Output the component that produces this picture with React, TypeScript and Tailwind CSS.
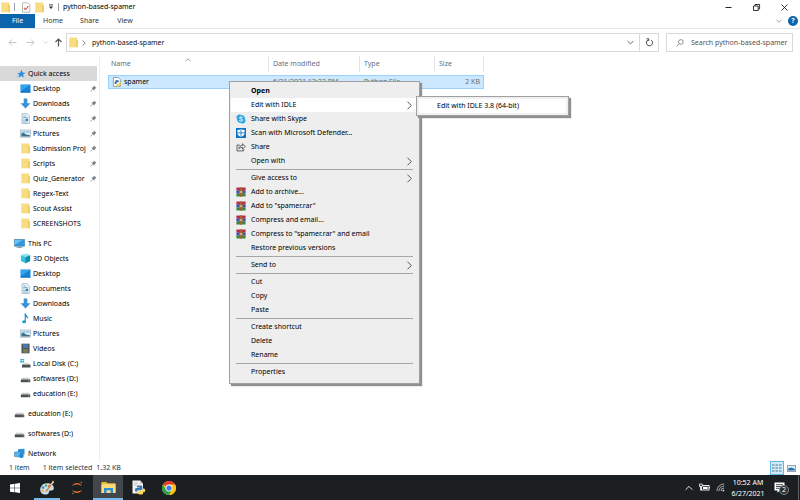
import { Fragment } from 'react';
import type { ReactNode } from 'react';

interface IconProps {
  className?: string;
}

function FolderIcon({ className = 'h-[11px] w-[11px]' }: IconProps) {
  return (
    <svg viewBox="0 0 11 11" className={className}>
      <path d="M1 .5h8.2v9.8H1z" fill="#f8dc83" />
      <path d="M8 3h2v7.3H8z" fill="#f2ce63" />
      <path d="M1 .5h1v9.8H1z" fill="#fbe7a4" />
    </svg>
  );
}

function StarIcon() {
  return (
    <svg viewBox="0 0 10 10" className="h-[10px] w-[10px]">
      <path d="M5.600.8l.9 2.700 3 .2-2.400 1.800.7 3L5.300 7 2.600 8.800l.7-3L1 4.200l2.800-.3z" fill="#2d8fdd" />
      <path d="M.3 8.500l2.200-2" stroke="#8fc3ec" strokeWidth=".8" />
    </svg>
  );
}

function DesktopIcon() {
  return (
    <svg viewBox="0 0 11 11" className="h-[11px] w-[11px]">
      <rect x=".5" y="1.500" width="10" height="8" fill="#1583d8" />
      <path d="M1 2h9L1 8z" fill="#2fa4f2" />
      <path d="M.5 8.700h10v.8H.5z" fill="#0f65ac" />
    </svg>
  );
}

function DownloadIcon() {
  return (
    <svg viewBox="0 0 11 11" className="h-[11px] w-[11px]">
      <path d="M3.700.5h3.600v4.700h3.200L5.500 10.500.5 5.200h3.200z" fill="#3a93d2" />
    </svg>
  );
}

function DocumentIcon() {
  return (
    <svg viewBox="0 0 11 11" className="h-[11px] w-[11px]">
      <path d="M2 .7h5.200L9.300 3v7.400H2z" fill="#f5f9fb" stroke="#8da4b2" strokeWidth=".7" />
      <path d="M3.200 3h3M3.200 4.500h4.600M3.200 6h1.500M3.200 7.500h1.500M3.200 9h4.600" stroke="#4e9bc8" strokeWidth=".7" />
      <path d="M5.500 5.600h2.600v2.400H5.500z" fill="#3c85b5" />
    </svg>
  );
}

function PictureIcon() {
  return (
    <svg viewBox="0 0 11 11" className="h-[11px] w-[11px]">
      <rect x=".6" y="2" width="9.800" height="7.200" fill="#e9f3f8" stroke="#a4b2ba" strokeWidth=".7" />
      <path d="M1.300 2.800h8.400v2.200H1.300z" fill="#9fd3ef" />
      <path d="M1.300 8.400V5.600l2.400-.9 2.200 1.700 3.800.7v1.300z" fill="#3d6f86" />
    </svg>
  );
}

function ComputerIcon() {
  return (
    <svg viewBox="0 0 11 11" className="h-[11px] w-[11px]">
      <rect x=".4" y="1.300" width="10.200" height="6.900" fill="#2a98e2" stroke="#5c7f97" strokeWidth=".6" />
      <path d="M.8 1.700h8L.8 7z" fill="#68c0f5" />
      <path d="M4.500 8.200h2v1h2v.8h-6v-.8h2z" fill="#7f99a8" />
    </svg>
  );
}

function CubeIcon() {
  return (
    <svg viewBox="0 0 11 11" className="h-[11px] w-[11px]">
      <path d="M5.500.7l4.600 1.600v5.800L5.500 10.300.9 8.100V2.300z" fill="#35c3dd" />
      <path d="M5.500.7l4.600 1.600-4.600 1.900L.9 2.300z" fill="#8ee3ef" />
      <path d="M5.500 4.200l4.600-1.900v5.800l-4.600 2.200z" fill="#1389ab" />
    </svg>
  );
}

function MusicIcon() {
  return (
    <svg viewBox="0 0 11 11" className="h-[11px] w-[11px]">
      <path d="M4.600.5h1.100c.2 2 3.200 2.600 2.400 5.600-.3-1.300-1.200-1.900-2.300-2.200v4.500" fill="#1b93dc" />
      <ellipse cx="4.100" cy="8.700" rx="1.900" ry="1.500" fill="#1b93dc" />
      <path d="M4.700.7v8h1.100v-8z" fill="#1b93dc" />
    </svg>
  );
}

function VideoIcon() {
  return (
    <svg viewBox="0 0 11 11" className="h-[11px] w-[11px]">
      <rect x="1.500" y=".7" width="8" height="9.600" fill="#3b4044" />
      <rect x="3" y="1.200" width="5" height="4" fill="#4a78b8" />
      <rect x="3" y="5.800" width="5" height="4" fill="#7b7d4e" />
      <path d="M2.200 1v9M8.800 1v9" stroke="#c4c8ca" strokeWidth=".5" strokeDasharray=".7 .7" />
    </svg>
  );
}

function DriveIcon() {
  return (
    <svg viewBox="0 0 11 11" className="h-[11px] w-[11px]">
      <path d="M2.200 4.800h6.600l1.400 2H.8z" fill="#c9cbcc" />
      <rect x=".8" y="6.600" width="9.500" height="2.700" rx=".3" fill="#4d5052" />
      <rect x="8.200" y="7.600" width="1.200" height=".7" fill="#8fe08b" />
    </svg>
  );
}

function SystemDriveIcon() {
  return (
    <svg viewBox="0 0 11 11" className="h-[11px] w-[11px]">
      <path d="M.3 1h1.700v1.600H.3zM2.400 1h1.700v1.600H2.400zM.3 3h1.700v1.600H.3zM2.400 3h1.700v1.600H2.400z" fill="#19a9e5" />
      <path d="M3 5.200h6.200l1 1.800H2z" fill="#c9cbcc" />
      <rect x="2" y="6.800" width="8.500" height="2.700" rx=".3" fill="#4d5052" />
    </svg>
  );
}

function NetworkIcon() {
  return (
    <svg viewBox="0 0 11 11" className="h-[11px] w-[11px]">
      <path d="M4 1.200l6.500-.5v5.800L4 6z" fill="#2f8fd6" />
      <path d="M.5 4l6-.3v5.500l-6-.6z" fill="#58b4ee" stroke="#2878b4" strokeWidth=".5" />
      <circle cx="7.500" cy="7.700" r="2.200" fill="#2786c6" />
    </svg>
  );
}

function PinIcon() {
  return (
    <svg viewBox="0 0 8 8" className="h-[7px] w-[7px] shrink-0">
      <path d="M4.500.6l2.900 2.900-.9.200-1.300 1.400-.2 1.500L1.500 3.100 3 2.900l1.300-1.300z" fill="#7a828b" />
      <path d="M3 5L.7 7.300" stroke="#7a828b" strokeWidth=".9" />
    </svg>
  );
}

function PythonFileIcon() {
  return (
    <svg viewBox="0 0 11 11" className="h-[10px] w-[10px]">
      <path d="M1.500.6h5.500l2.200 2.200v7.600H1.500z" fill="#fdfdfd" stroke="#78838c" strokeWidth=".8" />
      <path d="M3.800 3.600h3.500v2.200H5v2H3V5.200h.8z" fill="#35678f" />
      <path d="M9.500 6v3.300H7v1.200H5V7.800h2.500V6z" fill="#f3cf3f" />
    </svg>
  );
}

function SkypeIcon() {
  return (
    <svg viewBox="0 0 12 12" className="h-[10px] w-[10px]">
      <circle cx="4.200" cy="4.200" r="3.500" fill="#2ba7e4" />
      <circle cx="7.800" cy="7.800" r="3.500" fill="#2ba7e4" />
      <circle cx="6" cy="6" r="4.700" fill="#2ba7e4" />
      <path d="M8 4.300C7.600 3.300 4.200 3 4.200 4.700c0 1.500 3.800 1 3.800 2.700 0 1.500-3.500 1.500-4.100.2" fill="none" stroke="#fff" strokeWidth="1.100" />
    </svg>
  );
}

function DefenderIcon() {
  return (
    <svg viewBox="0 0 12 12" className="h-[10px] w-[10px]">
      <rect width="12" height="12" fill="#0f73c4" />
      <path d="M6 1.200c1.300.9 2.800 1.200 4.300 1.200v3.200c0 2.600-1.900 4.200-4.300 5.200-2.400-1-4.300-2.600-4.300-5.200V2.400C3.200 2.400 4.700 2.100 6 1.200z" fill="#fff" />
      <path d="M6 1v10M1.500 5.800h9" stroke="#0f73c4" strokeWidth="1" />
    </svg>
  );
}

function ShareIcon() {
  return (
    <svg viewBox="0 0 12 12" className="h-[10px] w-[10px]" fill="none" stroke="#333" strokeWidth=".9">
      <path d="M4.500 3.700H1.200v7h8V8.800" />
      <path d="M3.500 8.200c.2-2.800 1.700-4 4.200-4V2.100l3.500 3.300-3.500 3.200V6.500C5.800 6.500 4.500 7 3.500 8.200z" />
    </svg>
  );
}

function RarIcon() {
  return (
    <svg viewBox="0 0 12 12" className="h-[10px] w-[10px]">
      <path d="M.5.700h11v3.600H.5z" fill="#c42a4c" />
      <path d="M.5 4.300h11v3.500H.5z" fill="#3b55b5" />
      <path d="M.5 7.800h11v3.600H.5z" fill="#3f8f3f" />
      <path d="M.5 1.600h11M.5 5.200h11M.5 8.700h11" stroke="#1f1f3a" strokeOpacity=".35" strokeWidth=".6" />
      <path d="M4.600.5h2.800v11H4.600z" fill="#a8602b" />
      <rect x="3.900" y="4.200" width="4.200" height="3.700" fill="#f0d9a0" stroke="#6c3c1a" strokeWidth=".6" />
      <path d="M6 5v2" stroke="#6c3c1a" strokeWidth=".8" />
    </svg>
  );
}

function Chevron({ className = 'h-[9px] w-[9px]' }: IconProps) {
  return (
    <svg viewBox="0 0 9 9" className={className} fill="none" stroke="currentColor">
      <path d="M2.500.7l3.800 3.800-3.800 3.800" />
    </svg>
  );
}

interface NavItem {
  label: string;
  icon: ReactNode;
  pinned?: boolean;
}

const quickAccess: NavItem[] = [
  { label: 'Desktop', icon: <DesktopIcon />, pinned: true },
  { label: 'Downloads', icon: <DownloadIcon />, pinned: true },
  { label: 'Documents', icon: <DocumentIcon />, pinned: true },
  { label: 'Pictures', icon: <PictureIcon />, pinned: true },
  { label: 'Submission Proj', icon: <FolderIcon />, pinned: true },
  { label: 'Scripts', icon: <FolderIcon />, pinned: true },
  { label: 'Quiz_Generator', icon: <FolderIcon />, pinned: true },
  { label: 'Regex-Text', icon: <FolderIcon /> },
  { label: 'Scout Assist', icon: <FolderIcon /> },
  { label: 'SCREENSHOTS', icon: <FolderIcon /> },
];

const thisPc: NavItem[] = [
  { label: '3D Objects', icon: <CubeIcon /> },
  { label: 'Desktop', icon: <DesktopIcon /> },
  { label: 'Documents', icon: <DocumentIcon /> },
  { label: 'Downloads', icon: <DownloadIcon /> },
  { label: 'Music', icon: <MusicIcon /> },
  { label: 'Pictures', icon: <PictureIcon /> },
  { label: 'Videos', icon: <VideoIcon /> },
  { label: 'Local Disk (C:)', icon: <SystemDriveIcon /> },
  { label: 'softwares (D:)', icon: <DriveIcon /> },
  { label: 'education (E:)', icon: <DriveIcon /> },
];

interface MenuItem {
  label: string;
  icon?: ReactNode;
  submenu?: boolean;
  bold?: boolean;
  active?: boolean;
}

const menuGroups: MenuItem[][] = [
  [
    { label: 'Open', bold: true },
    { label: 'Edit with IDLE', submenu: true, active: true },
    { label: 'Share with Skype', icon: <SkypeIcon /> },
    { label: 'Scan with Microsoft Defender...', icon: <DefenderIcon /> },
    { label: 'Share', icon: <ShareIcon /> },
    { label: 'Open with', submenu: true },
  ],
  [
    { label: 'Give access to', submenu: true },
    { label: 'Add to archive...', icon: <RarIcon /> },
    { label: 'Add to "spamer.rar"', icon: <RarIcon /> },
    { label: 'Compress and email...', icon: <RarIcon /> },
    { label: 'Compress to "spamer.rar" and email', icon: <RarIcon /> },
    { label: 'Restore previous versions' },
  ],
  [{ label: 'Send to', submenu: true }],
  [{ label: 'Cut' }, { label: 'Copy' }, { label: 'Paste' }],
  [{ label: 'Create shortcut' }, { label: 'Delete' }, { label: 'Rename' }],
  [{ label: 'Properties' }],
];

function TitleBar() {
  return (
    <header className="flex h-[14px] items-center justify-between">
      <div className="flex items-center">
        <FolderIcon />
        <span className="ml-[3px] h-2 w-px bg-gray-400" />
        <button aria-label="Properties" className="ml-[6px]">
          <svg viewBox="0 0 10 11" className="h-[11px] w-[10px]">
            <path d="M1.500.8h5.300l2 2v7.500H1.500z" fill="#fff" stroke="#a9a9a9" strokeWidth=".8" />
            <path d="M3 5.800l1.500 1.800L7.500 4" fill="none" stroke="#d6573d" strokeWidth="1.100" />
          </svg>
        </button>
        <button aria-label="New folder" className="ml-[3px]">
          <FolderIcon />
        </button>
        <button aria-label="Customize toolbar" className="ml-[3px]">
          <svg viewBox="0 0 6 6" className="h-[6px] w-[6px]">
            <path d="M1 .9h4" stroke="#333" strokeWidth=".9" />
            <path d="M.8 2.600h4.400L3 5z" fill="#333" />
          </svg>
        </button>
        <span className="ml-[4px] h-2 w-px bg-gray-400" />
        <h1 className="ml-1">python-based-spamer</h1>
      </div>
      <div className="flex items-center gap-[19px] pr-[11px] text-[#222]">
        <button aria-label="Minimize">
          <svg viewBox="0 0 9 9" className="h-[9px] w-[9px]" stroke="currentColor">
            <path d="M1.500 4.500h6" />
          </svg>
        </button>
        <button aria-label="Restore">
          <svg viewBox="0 0 9 9" className="h-[9px] w-[9px]" fill="none" stroke="currentColor" strokeWidth=".9">
            <path d="M1.500 3h4.700v4.500H1.500zM3 3V1.500h4.600V6H6.200" />
          </svg>
        </button>
        <button aria-label="Close">
          <svg viewBox="0 0 9 9" className="h-[9px] w-[9px]" stroke="currentColor" strokeWidth=".9">
            <path d="M1.500 1.500l6 6M7.500 1.500l-6 6" />
          </svg>
        </button>
      </div>
    </header>
  );
}

function Ribbon() {
  return (
    <nav className="flex h-[15px] items-center border-b border-[#e4e5e6] text-[#333]">
      <button className="h-full w-[35px] bg-[#0c64ad] text-white">File</button>
      <button className="w-[36px]">Home</button>
      <button className="w-[37px]">Share</button>
      <button className="w-[34px]">View</button>
      <button aria-label="Expand the ribbon" className="ml-auto text-gray-500">
        <Chevron className="h-[6px] w-[6px] rotate-90" />
      </button>
      <button
        aria-label="Help"
        className="mr-[2px] ml-[6px] flex h-[10px] w-[10px] items-center justify-center rounded-full bg-[#0c64ad] font-bold text-white"
      >
        ?
      </button>
    </nav>
  );
}

function AddressBar() {
  return (
    <div className="flex h-[27px] items-center pr-[7px] text-[#444]">
      <div className="flex w-[66px] shrink-0 items-center pl-2">
        <button aria-label="Back" className="text-[#c4c6c8]">
          <svg viewBox="0 0 9 9" className="h-[9px] w-[9px]" fill="none" stroke="currentColor">
            <path d="M8.500 4.500H1M4 1.500l-3 3 3 3" />
          </svg>
        </button>
        <button aria-label="Forward" className="ml-[9px] text-[#c4c6c8]">
          <svg viewBox="0 0 9 9" className="h-[9px] w-[9px]" fill="none" stroke="currentColor">
            <path d="M.5 4.500H8M5 1.500l3 3-3 3" />
          </svg>
        </button>
        <button aria-label="Recent locations" className="ml-2 text-[#b4b6b8]">
          <Chevron className="h-[5px] w-[5px] rotate-90" />
        </button>
        <button aria-label="Up" className="ml-[6px] text-[#555]">
          <svg viewBox="0 0 9 9" className="h-[9px] w-[9px]" fill="none" stroke="currentColor" strokeWidth="1.200">
            <path d="M4.500 8.500V1M1.500 4l3-3 3 3" />
          </svg>
        </button>
      </div>
      <div className="flex h-[19px] flex-1 items-center border border-[#d9d9d9]">
        <span className="ml-px">
          <FolderIcon />
        </span>
        <Chevron className="mx-[2px] h-[6px] w-[6px]" />
        <button className="ml-[3px] text-[#111]">python-based-spamer</button>
        <button aria-label="Previous locations" className="mr-[5px] ml-auto">
          <Chevron className="h-[7px] w-[7px] rotate-90" />
        </button>
        <button
          aria-label="Refresh"
          className="flex h-full w-[19px] items-center justify-center border-l border-[#d9d9d9]"
        >
          <svg viewBox="0 0 9 9" className="h-[9px] w-[9px]" fill="none" stroke="currentColor">
            <path d="M6.300 2.200A3.100 3.100 0 1 1 3 2" />
            <path d="M1.500.8h2.200V3" />
          </svg>
        </button>
      </div>
      <label className="ml-[7px] flex h-[19px] w-[127px] items-center border border-[#d9d9d9] pl-[9px]">
        <svg viewBox="0 0 9 9" className="h-[8px] w-[8px] shrink-0" fill="none" stroke="#777" strokeWidth=".9">
          <circle cx="5.500" cy="3.300" r="2.600" />
          <path d="M3.600 5.300L.8 8.200" />
        </svg>
        <input
          type="text"
          aria-label="Search"
          placeholder="Search python-based-spamer"
          className="ml-[7px] w-full min-w-0 placeholder-[#555] outline-none"
        />
      </label>
    </div>
  );
}

function NavRoot({ label, icon }: NavItem) {
  return (
    <button className="flex h-[15px] w-full items-center gap-[3px] pl-[14px] text-left">
      {icon}
      {label}
    </button>
  );
}

function NavChild({ label, icon, pinned }: NavItem) {
  return (
    <button className="flex h-[15px] w-full items-center gap-[2px] pl-[20px] text-left whitespace-nowrap">
      {icon}
      <span className="w-[55px]">{label}</span>
      {pinned && <PinIcon />}
    </button>
  );
}

function Sidebar() {
  return (
    <aside className="w-[100px] shrink-0 border-r border-[#eeeeee] pt-[10px] pr-[2px]">
      <button className="flex h-[15px] w-full items-center gap-[2px] bg-[#d9d9d9] pl-[16px] text-left">
        <StarIcon />
        Quick access
      </button>
      {quickAccess.map((item) => (
        <NavChild key={item.label} {...item} />
      ))}
      <div className="mt-[5px]">
        <NavRoot label="This PC" icon={<ComputerIcon />} />
        {thisPc.map((item) => (
          <NavChild key={item.label} {...item} />
        ))}
      </div>
      <div className="mt-[5px] flex flex-col gap-[5px]">
        <NavRoot label="education (E:)" icon={<DriveIcon />} />
        <NavRoot label="softwares (D:)" icon={<DriveIcon />} />
        <NavRoot label="Network" icon={<NetworkIcon />} />
      </div>
    </aside>
  );
}

function FileList() {
  return (
    <table className="ml-2 w-[376px] table-fixed border-separate border-spacing-0">
      <thead>
        <tr className="h-[16px] text-left text-[#5f6f86]">
          <th className="w-[161px] border-r border-[#e5e5e5] pl-[3px] font-normal">
            <div className="flex items-center">
              <button className="w-[74px] text-left">Name</button>
              <Chevron className="mb-2 h-[6px] w-[6px] -rotate-90 text-gray-500" />
            </div>
          </th>
          <th className="w-[91px] border-r border-[#e5e5e5] pl-1 font-normal">
            <button>Date modified</button>
          </th>
          <th className="w-[75px] border-r border-[#e5e5e5] pl-1 font-normal">
            <button>Type</button>
          </th>
          <th className="border-r border-[#e5e5e5] pl-1 font-normal">
            <button>Size</button>
          </th>
        </tr>
      </thead>
      <tbody>
        <tr>
          <td colSpan={4} className="h-[3px]" />
        </tr>
        <tr className="h-[14px] bg-[#cce8ff] text-[#6d6d6d]">
          <td className="border-y border-l border-[#99d1ff] pl-[3px] text-black">
            <span className="flex items-center gap-[2px]">
              <PythonFileIcon />
              spamer
            </span>
          </td>
          <td className="border-y border-[#99d1ff] pl-1 whitespace-nowrap">6/21/2021 12:22 PM</td>
          <td className="border-y border-[#99d1ff] pl-1">Python File</td>
          <td className="border-y border-r border-[#99d1ff] pr-[3px] text-right">2 KB</td>
        </tr>
      </tbody>
    </table>
  );
}

function ContextMenu() {
  return (
    <div
      role="menu"
      className="absolute top-[25px] left-[129px] w-[191px] border border-[#a0a0a0] bg-[#eeeeee] px-px pt-[2px] pb-1 shadow-[2px_2px_1px_#909090]"
    >
      {menuGroups.map((group, index) => (
        <Fragment key={group[0].label}>
          {index > 0 && <hr className="mx-[5px] my-px border-[#a6a6a6]" />}
          {group.map((item) => (
            <button
              key={item.label}
              role="menuitem"
              className={`flex h-[14px] w-full items-center pr-[4px] pl-[5px] text-left ${item.active ? 'bg-white' : ''}`}
            >
              <span className="w-[15px] shrink-0">{item.icon}</span>
              <span className={`flex-1 whitespace-nowrap ${item.bold ? 'font-bold' : ''}`}>{item.label}</span>
              {item.submenu && <Chevron className="h-[9px] w-[9px] text-[#555]" />}
            </button>
          ))}
        </Fragment>
      ))}
    </div>
  );
}

function SubMenu() {
  return (
    <div
      role="menu"
      className="absolute top-[40px] left-[316px] w-[153px] border border-[#a0a0a0] bg-[#f0f0f0] p-[2px] shadow-[2px_2px_1px_#909090]"
    >
      <button role="menuitem" className="flex h-[14px] w-full items-center bg-white pl-[18px] text-left">
        Edit with IDLE 3.8 (64-bit)
      </button>
    </div>
  );
}

function StatusBar() {
  return (
    <footer className="flex h-[14px] items-center pr-[4px] pl-[9px] text-[#22364e]">
      <span>1 item</span>
      <span className="ml-[13px]">1 item selected</span>
      <span className="ml-1">1.32 KB</span>
      <button
        aria-label="Details view"
        className="ml-auto flex h-[14px] w-[14px] items-center justify-center border border-[#5fb8e8] bg-[#cfeaf9]"
      >
        <svg viewBox="0 0 10 8" className="h-[8px] w-[10px]">
          <path d="M0 1h2.500M0 4h2.500M0 7h2.500M3.500 1h2.500M3.500 4h2.500M3.500 7h2.500M7 1h2.500M7 4h2.500M7 7h2.500" stroke="#55788f" strokeWidth="1" />
        </svg>
      </button>
      <button aria-label="Large icons view" className="ml-[3px]">
        <svg viewBox="0 0 9 7" className="h-[7px] w-[9px]">
          <rect x=".4" y=".4" width="8.200" height="6.200" fill="#dceefa" stroke="#8595a0" strokeWidth=".8" />
          <path d="M1.200 5.500V3.600l3-1 3.600 1.500v1.400z" fill="#2a6fa8" />
        </svg>
      </button>
    </footer>
  );
}

function Taskbar() {
  return (
    <div className="flex h-[25px] bg-[#1b1f22] text-white">
      <button aria-label="Start" className="flex w-[30px] items-center justify-center">
        <svg viewBox="0 0 10 10" className="h-[10px] w-[10px]" fill="#fff">
          <path d="M0 1.400l4.500-.6v4H0zM5 .7L10 0v4.800H5zM0 5.300h4.500v4L0 8.700zM5 5.300h5V10l-5-.7z" />
        </svg>
      </button>
      <button
        aria-label="Paint"
        className="ml-1 flex w-[26px] items-center justify-center border-b-2 border-[#76b9ed] pt-[2px]"
      >
        <svg viewBox="0 0 16 16" className="h-[16px] w-[16px]">
          <path d="M8 3.200c4 0 7 2 6.800 5.200-.2 2.200-2.300 2-3.600 2-1.500.1-.8 1.800-1.800 3-1.200 1.400-4.700 1.500-7-.5C-.2 10.500 1.400 3.200 8 3.200z" fill="#c7dce8" />
          <circle cx="4" cy="7.500" r="1.300" fill="#3a8ec8" />
          <circle cx="7" cy="5.600" r="1.200" fill="#42a857" />
          <circle cx="10.300" cy="6.200" r="1.200" fill="#d94a3a" />
          <circle cx="3.700" cy="10.800" r="1.200" fill="#e4b53b" />
          <path d="M7 11.500L12.500 4" stroke="#d58936" strokeWidth="1.300" />
          <path d="M11.500 4.200L14 .6l1.300 1.300-2.500 3.200z" fill="#e9c89b" />
        </svg>
      </button>
      <button aria-label="Jupyter" className="ml-[2px] flex w-[30px] items-center justify-center">
        <svg viewBox="0 0 12 14" className="h-[14px] w-[12px]" fill="#e8702a">
          <path d="M1 5.200C3 .8 9 .8 11 5.200 8.500 3 3.500 3 1 5.200z" />
          <path d="M1 8.800c2 4.400 8 4.400 10 0-2.500 2.200-7.500 2.200-10 0z" />
          <circle cx="10.300" cy="1.500" r=".8" fill="#888" />
          <circle cx="2" cy="12.500" r=".8" fill="#888" />
        </svg>
      </button>
      <button
        aria-label="File Explorer"
        className="ml-px flex w-[30px] items-center justify-center border-b-2 border-[#76b9ed] bg-[#434749] pt-[2px]"
      >
        <svg viewBox="0 0 15 13" className="h-[13px] w-[15px]">
          <path d="M.5 1h5l1 1.300h8V12H.5z" fill="#e9b93d" />
          <path d="M.5 3.200h14V12H.5z" fill="#fbdc7c" />
          <path d="M3 12V7h9v5H9.500V9.300h-4V12z" fill="#2f8fd3" />
        </svg>
      </button>
      <button aria-label="Python IDLE" className="flex w-[31px] items-center justify-center">
        <svg viewBox="0 0 15 15" className="h-[15px] w-[15px]">
          <path d="M1.500.6h7.700L12 3.400v10H1.500z" fill="#f2f2f2" />
          <path d="M9.200.6L12 3.400H9.200z" fill="#b9b9b9" />
          <path d="M3 3h4M3 5h3" stroke="#b5b5b5" strokeWidth=".8" />
          <path d="M7 5.500h2.800c1 0 1.500.5 1.500 1.500v1.800c0 1-.6 1.400-1.500 1.400H7.500c-1 0-1.500.5-1.500 1.500H5C4.200 11.700 4 10.700 4 9.800 4 8.700 4.500 8 5.500 8h3v-.5H6V6.500c0-.6.400-1 1-1z" fill="#3b78ad" />
          <path d="M10.800 14.400H8.500c-1 0-1.500-.5-1.500-1.400v-1c0-.9.600-1.300 1.500-1.300h2c1 0 1.500-.6 1.500-2.200h.8c1 0 1.400 1 1.400 2 0 1.100-.5 1.800-1.400 1.800H9.700v.5H12v.6c0 .6-.5 1-1.200 1z" fill="#fbd448" />
        </svg>
      </button>
      <button aria-label="Chrome" className="flex w-[30px] items-center justify-center">
        <svg viewBox="0 0 24 24" className="h-[14px] w-[14px]">
          <circle cx="12" cy="12" r="12" fill="#fbc116" />
          <path d="M12 12L1.600 6A12 12 0 0 1 22.400 6z" fill="#e33b2e" />
          <path d="M12 6h10.400A12 12 0 0 1 12 24l5.200-9z" fill="#fbc116" />
          <path d="M1.600 6l5.200 9L12 17.500h3.700L12 24A12 12 0 0 1 1.600 6z" fill="#2da14c" />
          <circle cx="12" cy="12" r="5.800" fill="#fff" />
          <circle cx="12" cy="12" r="4.500" fill="#3f7de8" />
        </svg>
      </button>
      <div className="mr-px ml-auto flex items-center border-r border-[#5c6063] pr-[13px]">
        <button aria-label="Show hidden icons">
          <Chevron className="h-[8px] w-[8px] -rotate-90" />
        </button>
        <button aria-label="Battery" className="ml-[6px]">
          <svg viewBox="0 0 11 9" className="h-[9px] w-[11px]">
            <rect x="2.500" y="2.500" width="7.500" height="4.500" fill="none" stroke="#fff" strokeWidth=".9" />
            <path d="M4 3.700h4.700v2.200H4zM10.200 4h.8v1.600h-.8z" fill="#fff" />
            <path d="M.5 1h2.800v2.500H.5zM1.500 3v4.500" stroke="#fff" strokeWidth=".8" fill="#1b1f22" />
          </svg>
        </button>
        <button aria-label="Network" className="ml-[6px]">
          <svg viewBox="0 0 10 10" className="h-[9px] w-[9px]" fill="none" stroke="#c9cbcc" strokeWidth=".9">
            <path d="M1 9A8 8 0 0 1 9 1M3.300 9A5.700 5.700 0 0 1 9 3.300M5.500 9A3.500 3.500 0 0 1 9 5.500" />
            <circle cx="8.200" cy="8.400" r=".7" fill="#fff" />
          </svg>
        </button>
        <button className="ml-[4px] w-[38px] text-center leading-[11px] whitespace-nowrap">
          10:52 AM
          <br />
          6/27/2021
        </button>
        <button aria-label="Notifications" className="relative ml-[7px]">
          <svg viewBox="0 0 11 11" className="h-[11px] w-[11px]">
            <path d="M.5.5h10v8H6L3.500 10.800V8.500h-3z" fill="#fff" />
            <path d="M2 2.700h7M2 4.500h7M2 6.300h5" stroke="#1b1f22" strokeWidth=".8" />
          </svg>
          <span className="absolute top-[3px] left-[5px] flex h-[10px] w-[10px] items-center justify-center rounded-full border border-[#888] bg-[#2c3033] leading-[8px]">
            2
          </span>
        </button>
      </div>
    </div>
  );
}

export default function App() {
  return (
    <div className="flex min-h-screen flex-col bg-white font-['Noto_Sans',sans-serif] text-[7px] leading-[10px] text-black">
      <TitleBar />
      <Ribbon />
      <AddressBar />
      <div className="flex flex-1">
        <Sidebar />
        <main className="relative flex-1">
          <FileList />
          <ContextMenu />
          <SubMenu />
        </main>
      </div>
      <StatusBar />
      <Taskbar />
    </div>
  );
}
